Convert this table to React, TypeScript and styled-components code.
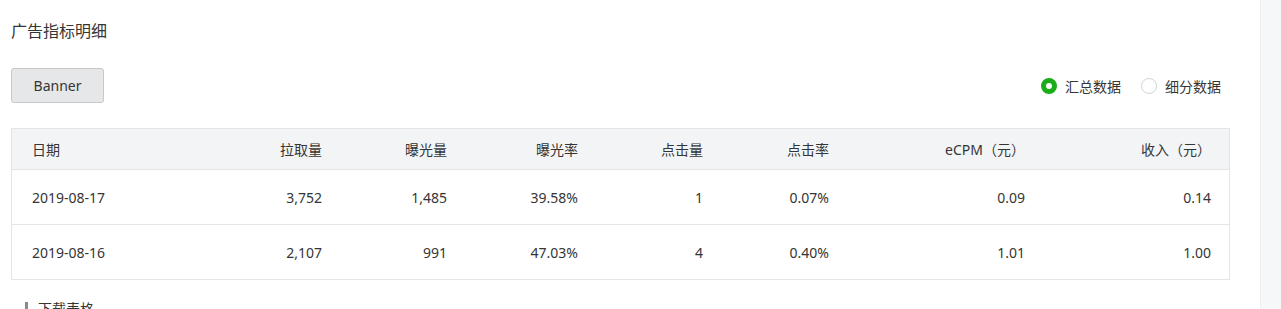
import styled, { createGlobalStyle } from 'styled-components'

const GlobalStyle = createGlobalStyle`
  html, body {
    margin: 0;
    padding: 0;
    background: #fff;
  }
  body {
    font-family: "Noto Sans", "Noto Sans CJK SC", sans-serif;
    color: #353535;
    font-size: 14px;
  }
`

const columns = [
  { key: 'date', title: '日期', width: 200 },
  { key: 'pull', title: '拉取量', width: 130 },
  { key: 'expo', title: '曝光量', width: 125 },
  { key: 'expoRate', title: '曝光率', width: 131 },
  { key: 'click', title: '点击量', width: 125 },
  { key: 'clickRate', title: '点击率', width: 126 },
  { key: 'ecpm', title: 'eCPM（元）', width: 196 },
  { key: 'income', title: '收入（元）', width: 186 },
]

const rows = [
  ['2019-08-17', '3,752', '1,485', '39.58%', '1', '0.07%', '0.09', '0.14'],
  ['2019-08-16', '2,107', '991', '47.03%', '4', '0.40%', '1.01', '1.00'],
]

const gridTemplate = columns.map((c) => `${c.width}px`).join(' ')

export default function App() {
  return (
    <Page>
      <GlobalStyle />
      <Main>
        <Title>广告指标明细</Title>
        <Toolbar>
          <TabButton>Banner</TabButton>
          <RadioGroup>
            <RadioItem>
              <RadioDot checked />
              汇总数据
            </RadioItem>
            <RadioItem>
              <RadioDot />
              细分数据
            </RadioItem>
          </RadioGroup>
        </Toolbar>
        <Table>
          <HeadRow style={{ gridTemplateColumns: gridTemplate }}>
            {columns.map((c, i) => (
              <Cell key={c.key} alignLeft={i === 0}>
                {c.title}
              </Cell>
            ))}
          </HeadRow>
          {rows.map((r) => (
            <BodyRow key={r[0]} style={{ gridTemplateColumns: gridTemplate }}>
              {r.map((v, i) => (
                <Cell key={i} alignLeft={i === 0}>
                  {v}
                </Cell>
              ))}
            </BodyRow>
          ))}
        </Table>
        <Download>
          <DownloadIcon />
          下载表格
        </Download>
      </Main>
      <Sidebar />
    </Page>
  )
}

const Page = styled.div`
  display: flex;
  width: 1281px;
  height: 309px;
  overflow: hidden;
`

const Main = styled.div`
  width: 1260px;
  padding: 0 30px 0 11px;
  box-sizing: border-box;
`

const Title = styled.div`
  font-size: 16px;
  line-height: 22px;
  padding-top: 20px;
  color: #353535;
`

const Toolbar = styled.div`
  display: flex;
  justify-content: space-between;
  align-items: center;
  margin-top: 26px;
  height: 35px;
`

const TabButton = styled.button`
  width: 93px;
  height: 35px;
  box-sizing: border-box;
  border: 1px solid #c8c8c8;
  border-radius: 3px;
  background: #e6e7e9;
  color: #353535;
  font-family: inherit;
  font-size: 14px;
  padding: 0;
`

const RadioGroup = styled.div`
  display: flex;
  gap: 20px;
  padding-right: 9px;
`

const RadioItem = styled.label`
  display: flex;
  align-items: center;
  gap: 8px;
  font-size: 14px;
  color: #353535;
`

const RadioDot = styled.span<{ checked?: boolean }>`
  width: 16px;
  height: 16px;
  box-sizing: border-box;
  border-radius: 50%;
  border: ${(p) => (p.checked ? '5px solid #1aad19' : '1px solid #d4d4d4')};
  background: #fff;
`

const Table = styled.div`
  margin-top: 25px;
  width: 1219px;
  border: 1px solid #e5e5e5;
  box-sizing: border-box;
`

const HeadRow = styled.div`
  display: grid;
  height: 40px;
  align-items: center;
  background: #f3f4f6;
  border-bottom: 1px solid #e5e5e5;
`

const BodyRow = styled.div`
  display: grid;
  height: 54px;
  align-items: center;
  & + & {
    border-top: 1px solid #e5e5e5;
  }
`

const Cell = styled.div<{ alignLeft?: boolean }>`
  text-align: ${(p) => (p.alignLeft ? 'left' : 'right')};
  padding: ${(p) => (p.alignLeft ? '0 0 0 20px' : '0 20px 0 0')};
  font-size: 14px;
  color: #353535;
  white-space: nowrap;
`

const Download = styled.div`
  display: flex;
  align-items: center;
  gap: 10px;
  margin-top: 18px;
  padding-left: 14px;
  font-size: 14px;
  color: #353535;
`

const DownloadIcon = styled.span`
  width: 3px;
  height: 12px;
  background: #8a8a8a;
`

const Sidebar = styled.div`
  flex: 1;
  background: #f6f7f9;
  border-left: 1px solid #eceef1;
`
